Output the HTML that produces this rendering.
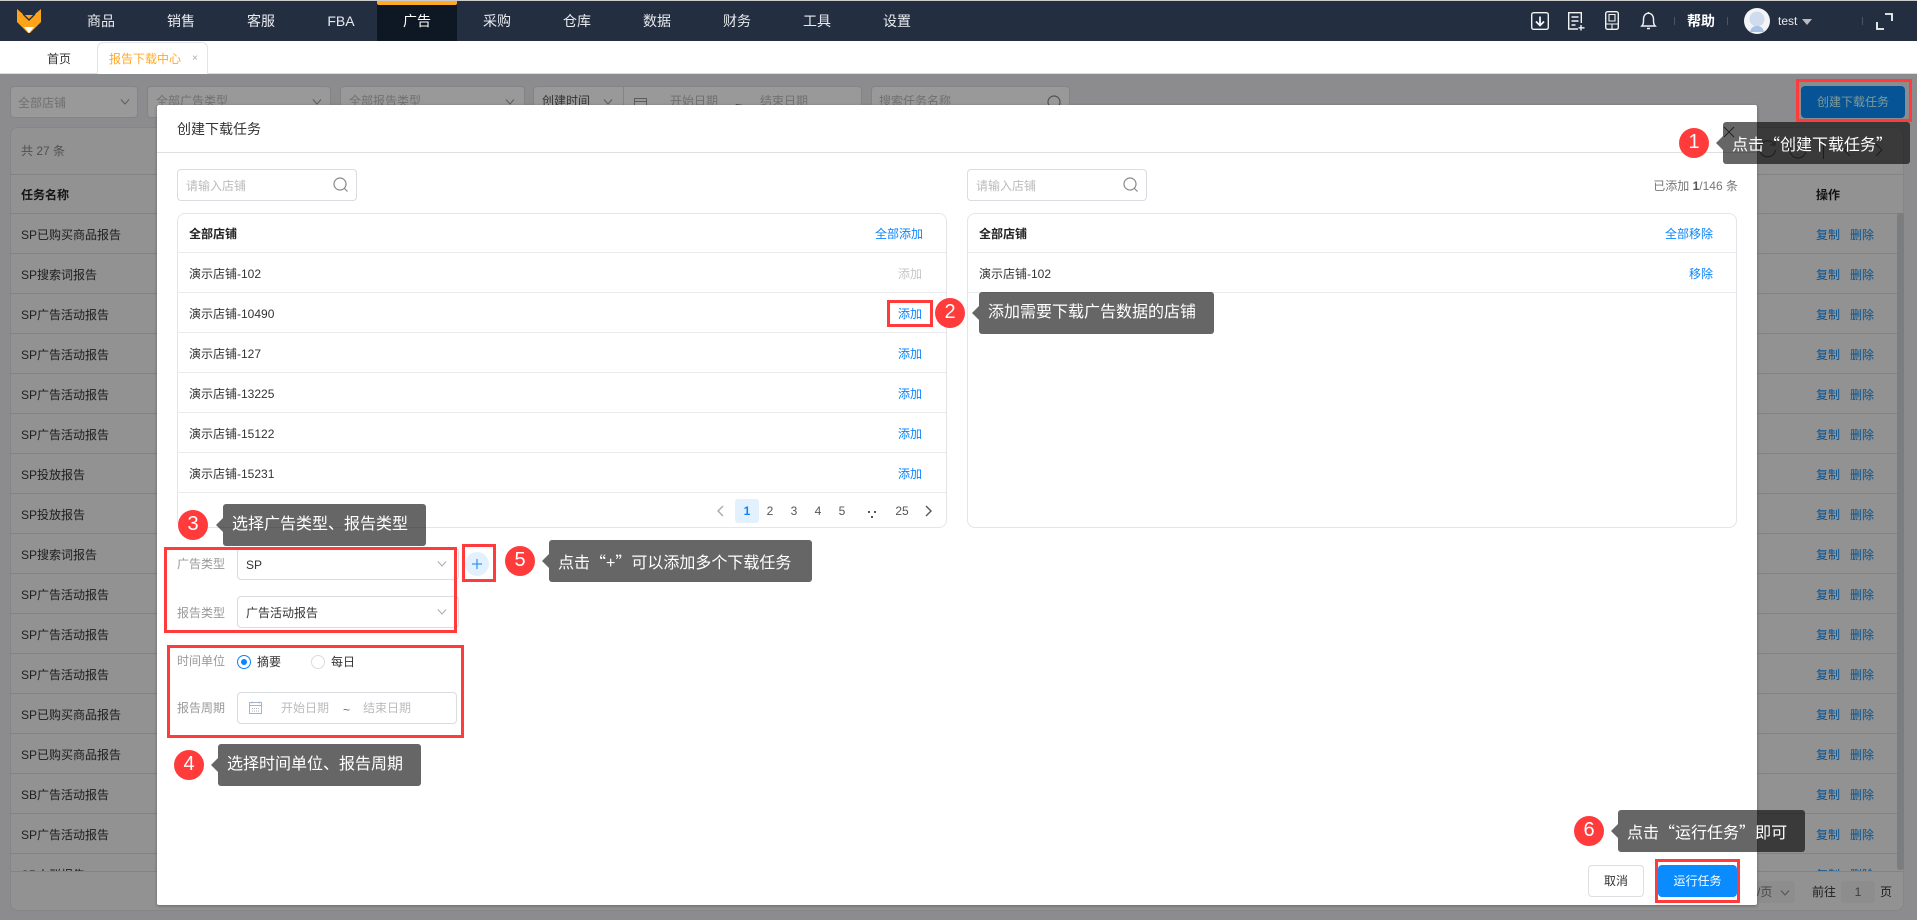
<!DOCTYPE html>
<html lang="zh-CN">
<head>
<meta charset="utf-8">
<title>报告下载中心</title>
<style>
*{box-sizing:border-box;margin:0;padding:0}
html,body{width:1917px;height:920px;overflow:hidden;background:#fff}
body{position:relative;font-family:"Liberation Sans","Noto Sans CJK SC",sans-serif;font-size:12px;color:#333}
.a{position:absolute}
.t{position:absolute;height:20px;line-height:20px;white-space:nowrap}
.nav{left:0;top:1px;width:1917px;height:40px;background:#232f41}
.top{left:0;top:0;width:1917px;height:1px;background:#ccc}
.ni{position:absolute;top:1px;height:40px;line-height:40px;width:80px;text-align:center;color:#e8eaed;font-size:14px}
.page{left:0;top:74px;width:1917px;height:846px;background:#e9eaed;overflow:hidden}
.fld{position:absolute;background:#fff;border:1px solid #d9dce1;border-radius:4px}
.overlay{left:0;top:74px;width:1917px;height:846px;background:rgba(0,0,0,.4)}
.modal{left:157px;top:105px;width:1600px;height:800px;background:#fff;border-radius:2px;box-shadow:0 1px 3px rgba(0,0,0,.3)}
.ln{position:absolute;height:1px;background:#e9ebee}
.panel{position:absolute;background:#fff;border:1px solid #e3e5e9;border-radius:8px}
.blue{color:#0a84ff}
.gr{color:#999}
.tip{position:absolute;height:42px;line-height:42px;background:rgba(0,0,0,.6);border-radius:3px;color:#fff;font-size:16px;white-space:nowrap}
.tip:before{content:"";position:absolute;left:-7px;top:14px;border-style:solid;border-width:7px 7px 7px 0;border-color:transparent rgba(0,0,0,.6) transparent transparent}
.num{position:absolute;width:30px;height:30px;border-radius:50%;background:#ff3b3b;color:#fff;font-size:20px;line-height:29px;text-align:center}
.rb{position:absolute;border:3px solid #ff3b3b}
.q{font-family:"Noto Sans CJK SC",sans-serif}
.tl{position:absolute;left:21px;height:20px;line-height:20px;color:#333}
.op{position:absolute;height:20px;line-height:20px;color:#0a8cf8}
.rl{position:absolute;left:10px;width:1894px;height:1px;background:#dadada}
.pg{position:absolute;top:501px;height:20px;line-height:20px;color:#555;width:24px;text-align:center}
svg{position:absolute;overflow:visible}
</style>
</head>
<body>
<!-- Header -->
<div class="a top"></div>
<div class="a nav"></div>
<div class="a" style="left:377px;top:1px;width:80px;height:40px;background:#0e1824"></div>
<div class="a" style="left:377px;top:1px;width:80px;height:4px;background:#ffa928;border-radius:0 0 2px 2px"></div>
<svg style="left:17px;top:9px" width="24" height="24" viewBox="0 0 24 24">
<path d="M0 0 L7 6 L17 6 L24 0 V13 L13 24 H11 L0 13Z" fill="#ffa31a"/>
<path d="M6 5 L12 11 L18 5" fill="none" stroke="#232f41" stroke-width="1.4"/>
<path d="M7 18 H17 L12 24Z" fill="#fff"/>
</svg>
<div class="ni" style="left:61px">商品</div>
<div class="ni" style="left:141px">销售</div>
<div class="ni" style="left:221px">客服</div>
<div class="ni" style="left:301px">FBA</div>
<div class="ni" style="left:377px;color:#fff">广告</div>
<div class="ni" style="left:457px">采购</div>
<div class="ni" style="left:537px">仓库</div>
<div class="ni" style="left:617px">数据</div>
<div class="ni" style="left:697px">财务</div>
<div class="ni" style="left:777px">工具</div>
<div class="ni" style="left:857px">设置</div>

<svg style="left:1531px;top:12px" width="18" height="18" viewBox="0 0 18 18" fill="none" stroke="#f2f3f5" stroke-width="1.4"><rect x=".7" y=".7" width="16.600" height="16.600" rx="2"/><path d="M9 4.500V13M5 9.500L9 13.500L13 9.500" stroke-width="1.800"/></svg>
<svg style="left:1568px;top:12px" width="18" height="19" viewBox="0 0 18 19" fill="none" stroke="#f2f3f5" stroke-width="1.4"><path d="M10 17H.7V.7H13.300V11"/><path d="M3.500 5H10.500M3.500 9H10.500M3.500 13H7.500M13 13V18.500M10.500 15.800H16.500"/></svg>
<svg style="left:1605px;top:11px" width="14" height="19" viewBox="0 0 14 19" fill="none" stroke="#f2f3f5" stroke-width="1.4"><rect x=".7" y=".7" width="12.600" height="17.600" rx="2"/><path d="M1 13H13M7 13V18.500M4 3.500H10V10H4Z" stroke-width="1.100"/></svg>
<svg style="left:1641px;top:11px" width="15" height="19" viewBox="0 0 15 19" fill="none" stroke="#f2f3f5" stroke-width="1.4"><path d="M.8 15H14.200C12.300 13 12.500 11 12.500 8C12.500 5 10.500 2.200 7.500 2.200C4.500 2.200 2.500 5 2.500 8C2.500 11 2.700 13 .8 15ZM7.500 1V2.200M6 17.500H9"/></svg>
<div class="a" style="left:1674px;top:17px;width:1px;height:8px;background:#4a5566"></div>
<div class="t" style="left:1687px;top:11px;color:#fff;font-size:14px;font-weight:bold">帮助</div>
<div class="a" style="left:1727px;top:17px;width:1px;height:8px;background:#4a5566"></div>
<svg style="left:1744px;top:8px" width="26" height="26" viewBox="0 0 26 26"><circle cx="13" cy="13" r="13" fill="#f2f4f7"/><circle cx="13" cy="11" r="7.500" fill="#cfdcee"/><path d="M6 24C7 19 10 18 13 18S19 19 20 24Z" fill="#a9c2e3"/></svg>
<div class="t" style="left:1778px;top:11px;color:#e8eaed;font-size:12px">test</div>
<div class="a" style="left:1802px;top:19px;border-style:solid;border-width:6px 5px 0 5px;border-color:#bbb transparent transparent transparent"></div>
<div class="a" style="left:1862px;top:17px;width:1px;height:8px;background:#4a5566"></div>
<svg style="left:1876px;top:13px" width="17" height="17" viewBox="0 0 17 17" fill="none" stroke="#f5f6f7" stroke-width="1.800"><path d="M9 1H16V8M1 9V16H8"/></svg>

<!-- Tabs -->
<div class="a" style="left:0;top:73px;width:1917px;height:1px;background:#dcdde0"></div>
<div class="t" style="left:47px;top:49px;color:#333">首页</div>
<div class="a" style="left:97px;top:42px;width:111px;height:32px;background:#fff;border:1px solid #e3e4e7;border-bottom:0;border-radius:6px 6px 0 0"></div>
<div class="t" style="left:109px;top:49px;color:#ffa928">报告下载中心</div>
<div class="t" style="left:192px;top:49px;color:#aaa;font-size:10px">×</div>

<!-- Underlying page -->
<div class="a page"></div>
<div class="fld" style="left:10px;top:86px;width:128px;height:32px"></div>
<div class="t" style="left:18px;top:93px;color:#bbb">全部店铺</div>
<svg style="left:120px;top:99px" width="10" height="6" fill="none" stroke="#999"><path d="M1 .500L5 5L9 .500"/></svg>
<div class="fld" style="left:147px;top:86px;width:184px;height:32px"></div>
<div class="t" style="left:156px;top:91px;color:#bbb">全部广告类型</div>
<svg style="left:312px;top:99px" width="10" height="6" fill="none" stroke="#999"><path d="M1 .500L5 5L9 .500"/></svg>
<div class="fld" style="left:340px;top:86px;width:185px;height:32px"></div>
<div class="t" style="left:349px;top:91px;color:#bbb">全部报告类型</div>
<svg style="left:505px;top:99px" width="10" height="6" fill="none" stroke="#999"><path d="M1 .500L5 5L9 .500"/></svg>
<div class="fld" style="left:533px;top:86px;width:329px;height:32px"></div>
<div class="a" style="left:623px;top:86px;width:1px;height:32px;background:#d9dce1"></div>
<div class="t" style="left:542px;top:91px;color:#555">创建时间</div>
<svg style="left:603px;top:99px" width="10" height="6" fill="none" stroke="#999"><path d="M1 .500L5 5L9 .500"/></svg>
<svg style="left:634px;top:96px" width="13" height="14" fill="none" stroke="#999"><rect x=".5" y="2.500" width="12" height="11"/><path d="M1 5.500H12"/></svg>
<div class="t" style="left:670px;top:91px;color:#bbb">开始日期</div>
<div class="t" style="left:735px;top:95px;color:#777">~</div>
<div class="t" style="left:760px;top:91px;color:#bbb">结束日期</div>
<div class="fld" style="left:871px;top:86px;width:199px;height:32px"></div>
<div class="t" style="left:879px;top:91px;color:#bbb">搜索任务名称</div>
<svg style="left:1047px;top:95px" width="15" height="15" fill="none" stroke="#888" stroke-width="1.200"><circle cx="7" cy="7" r="6"/><path d="M11 11L14 14"/></svg>
<div class="a" style="left:1801px;top:86px;width:104px;height:32px;background:#0a8cf8;border-radius:4px"></div>
<div class="t" style="left:1817px;top:92px;color:rgb(208,255,255);font-size:12px">创建下载任务</div>

<!-- Card -->
<div class="a" style="left:10px;top:127px;width:1894px;height:784px;background:#f4f4f4;border:1px solid #dedfe2;border-radius:8px"></div>
<div class="t" style="left:21px;top:141px;color:#888">共 27 条</div>
<svg style="left:1758px;top:139px" width="140" height="22" fill="none" stroke="#777" stroke-width="1"><path d="M16 5A8 8 0 1 0 17.500 11M17 1.500V6H12.500"/><circle cx="40" cy="11" r="8"/><path d="M38 9C38 6.500 42.500 6.500 42.500 9C42.500 11 40 11 40 13M40 15V16M65.500 2V20M92 5L86 11L92 17M118 5L124 11L118 17"/></svg>
<div class="rl" style="top:174px"></div><div class="rl" style="top:213px"></div>
<div class="tl" style="top:185px;font-weight:bold;color:#222">任务名称</div>
<div class="op" style="left:1816px;top:185px;font-weight:bold;color:#222">操作</div>

<div class="tl" style="top:225px">SP已购买商品报告</div><div class="rl" style="top:253px"></div>
<div class="tl" style="top:265px">SP搜索词报告</div><div class="rl" style="top:293px"></div>
<div class="tl" style="top:305px">SP广告活动报告</div><div class="rl" style="top:333px"></div>
<div class="tl" style="top:345px">SP广告活动报告</div><div class="rl" style="top:373px"></div>
<div class="tl" style="top:385px">SP广告活动报告</div><div class="rl" style="top:413px"></div>
<div class="tl" style="top:425px">SP广告活动报告</div><div class="rl" style="top:453px"></div>
<div class="tl" style="top:465px">SP投放报告</div><div class="rl" style="top:493px"></div>
<div class="tl" style="top:505px">SP投放报告</div><div class="rl" style="top:533px"></div>
<div class="tl" style="top:545px">SP搜索词报告</div><div class="rl" style="top:573px"></div>
<div class="tl" style="top:585px">SP广告活动报告</div><div class="rl" style="top:613px"></div>
<div class="tl" style="top:625px">SP广告活动报告</div><div class="rl" style="top:653px"></div>
<div class="tl" style="top:665px">SP广告活动报告</div><div class="rl" style="top:693px"></div>
<div class="tl" style="top:705px">SP已购买商品报告</div><div class="rl" style="top:733px"></div>
<div class="tl" style="top:745px">SP已购买商品报告</div><div class="rl" style="top:773px"></div>
<div class="tl" style="top:785px">SB广告活动报告</div><div class="rl" style="top:813px"></div>
<div class="tl" style="top:825px">SP广告活动报告</div><div class="rl" style="top:853px"></div>

<div class="op" style="left:1816px;top:225px">复制</div><div class="op" style="left:1850px;top:225px">删除</div>
<div class="op" style="left:1816px;top:265px">复制</div><div class="op" style="left:1850px;top:265px">删除</div>
<div class="op" style="left:1816px;top:305px">复制</div><div class="op" style="left:1850px;top:305px">删除</div>
<div class="op" style="left:1816px;top:345px">复制</div><div class="op" style="left:1850px;top:345px">删除</div>
<div class="op" style="left:1816px;top:385px">复制</div><div class="op" style="left:1850px;top:385px">删除</div>
<div class="op" style="left:1816px;top:425px">复制</div><div class="op" style="left:1850px;top:425px">删除</div>
<div class="op" style="left:1816px;top:465px">复制</div><div class="op" style="left:1850px;top:465px">删除</div>
<div class="op" style="left:1816px;top:505px">复制</div><div class="op" style="left:1850px;top:505px">删除</div>
<div class="op" style="left:1816px;top:545px">复制</div><div class="op" style="left:1850px;top:545px">删除</div>
<div class="op" style="left:1816px;top:585px">复制</div><div class="op" style="left:1850px;top:585px">删除</div>
<div class="op" style="left:1816px;top:625px">复制</div><div class="op" style="left:1850px;top:625px">删除</div>
<div class="op" style="left:1816px;top:665px">复制</div><div class="op" style="left:1850px;top:665px">删除</div>
<div class="op" style="left:1816px;top:705px">复制</div><div class="op" style="left:1850px;top:705px">删除</div>
<div class="op" style="left:1816px;top:745px">复制</div><div class="op" style="left:1850px;top:745px">删除</div>
<div class="op" style="left:1816px;top:785px">复制</div><div class="op" style="left:1850px;top:785px">删除</div>
<div class="op" style="left:1816px;top:825px">复制</div><div class="op" style="left:1850px;top:825px">删除</div>
<div class="a" style="left:1897px;top:213px;width:7px;height:657px;background:#cfd0d3;border-radius:3px"></div>
<div class="a" style="left:11px;top:854px;width:1892px;height:56px;overflow:hidden;border-radius:0 0 8px 8px"><div class="tl" style="left:10px;top:11px">SP人群报告</div><div class="op" style="left:1805px;top:11px">复制</div><div class="op" style="left:1839px;top:11px">删除</div><div class="a" style="left:0;top:17px;width:1892px;height:39px;background:#f4f4f4;border-top:1px solid #dadada"></div></div>
<div class="a" style="left:1750px;top:881px;width:45px;height:22px;background:#ebebed;border-radius:4px"></div>
<div class="t" style="left:1757px;top:882px;color:#777">/页</div>
<svg style="left:1780px;top:890px" width="10" height="6" fill="none" stroke="#888"><path d="M1 .500L5 5L9 .500"/></svg>
<div class="t" style="left:1812px;top:882px">前往</div>
<div class="a" style="left:1841px;top:881px;width:34px;height:22px;background:#ebebed;border-radius:4px;text-align:center;line-height:22px;color:#666">1</div>
<div class="t" style="left:1880px;top:882px">页</div>

<div class="a overlay"></div>

<!-- Modal -->
<div class="a modal"></div>
<div class="t" style="left:177px;top:119px;font-size:14px;color:#333">创建下载任务</div>
<svg style="left:1723px;top:126px" width="12" height="12" fill="none" stroke="#555"><path d="M1 1L11 11M11 1L1 11"/></svg>
<div class="ln" style="left:157px;top:152px;width:1600px;background:#dfe0e3"></div>

<div class="fld" style="left:177px;top:169px;width:180px;height:32px"></div>
<div class="t" style="left:186px;top:176px;color:#bbb">请输入店铺</div>
<svg style="left:333px;top:177px" width="16" height="16" fill="none" stroke="#888" stroke-width="1.200"><circle cx="7" cy="7" r="6"/><path d="M11 11L14.500 14.500"/></svg>
<div class="fld" style="left:967px;top:169px;width:180px;height:32px"></div>
<div class="t" style="left:976px;top:176px;color:#bbb">请输入店铺</div>
<svg style="left:1123px;top:177px" width="16" height="16" fill="none" stroke="#888" stroke-width="1.200"><circle cx="7" cy="7" r="6"/><path d="M11 11L14.500 14.500"/></svg>
<div class="t" style="right:179px;top:176px;color:#777">已添加 <b style="color:#555">1</b>/146 条</div>

<div class="panel" style="left:177px;top:213px;width:770px;height:315px"></div>
<div class="ln" style="left:178px;top:252px;width:768px"></div>
<div class="ln" style="left:178px;top:292px;width:768px"></div>
<div class="ln" style="left:178px;top:332px;width:768px"></div>
<div class="ln" style="left:178px;top:372px;width:768px"></div>
<div class="ln" style="left:178px;top:412px;width:768px"></div>
<div class="ln" style="left:178px;top:452px;width:768px"></div>
<div class="ln" style="left:178px;top:492px;width:768px"></div>
<div class="t" style="left:189px;top:224px;font-weight:bold;color:#222">全部店铺</div>
<div class="t blue" style="left:875px;top:224px">全部添加</div>
<div class="t" style="left:189px;top:264px">演示店铺-102</div><div class="t" style="left:898px;top:264px;color:#c4c6ca">添加</div>
<div class="t" style="left:189px;top:304px">演示店铺-10490</div><div class="t blue" style="left:898px;top:304px">添加</div>
<div class="t" style="left:189px;top:344px">演示店铺-127</div><div class="t blue" style="left:898px;top:344px">添加</div>
<div class="t" style="left:189px;top:384px">演示店铺-13225</div><div class="t blue" style="left:898px;top:384px">添加</div>
<div class="t" style="left:189px;top:424px">演示店铺-15122</div><div class="t blue" style="left:898px;top:424px">添加</div>
<div class="t" style="left:189px;top:464px">演示店铺-15231</div><div class="t blue" style="left:898px;top:464px">添加</div>

<svg style="left:716px;top:505px" width="8" height="12" fill="none" stroke="#aaa" stroke-width="1.400"><path d="M7 1L2 6L7 11"/></svg>
<div class="a" style="left:735px;top:499px;width:24px;height:24px;background:#e3f1ff;border-radius:3px"></div>
<div class="pg" style="left:735px;color:#0a84ff;font-weight:bold">1</div>
<div class="pg" style="left:758px">2</div>
<div class="pg" style="left:782px">3</div>
<div class="pg" style="left:806px">4</div>
<div class="pg" style="left:830px">5</div>
<svg style="left:868px;top:510px" width="9" height="9" fill="#555"><rect x="0" y="1" width="2" height="2"/><rect x="6" y="1" width="2" height="2"/><rect x="3" y="6" width="2" height="2"/></svg>
<div class="pg" style="left:890px">25</div>
<svg style="left:925px;top:505px" width="8" height="12" fill="none" stroke="#555" stroke-width="1.400"><path d="M1 1L6 6L1 11"/></svg>

<div class="panel" style="left:967px;top:213px;width:770px;height:315px"></div>
<div class="ln" style="left:968px;top:252px;width:768px"></div>
<div class="ln" style="left:968px;top:292px;width:768px"></div>
<div class="t" style="left:979px;top:224px;font-weight:bold;color:#222">全部店铺</div>
<div class="t blue" style="left:1665px;top:224px">全部移除</div>
<div class="t" style="left:979px;top:264px">演示店铺-102</div>
<div class="t blue" style="left:1689px;top:264px">移除</div>

<!-- Form -->
<div class="t gr" style="left:177px;top:554px">广告类型</div>
<div class="fld" style="left:237px;top:548px;width:222px;height:32px"></div>
<div class="t" style="left:246px;top:555px">SP</div>
<svg style="left:437px;top:561px" width="10" height="6" fill="none" stroke="#aaa"><path d="M1 .500L5 5L9 .500"/></svg>
<div class="t gr" style="left:177px;top:603px">报告类型</div>
<div class="fld" style="left:237px;top:596px;width:222px;height:32px"></div>
<div class="t" style="left:246px;top:603px">广告活动报告</div>
<svg style="left:437px;top:609px" width="10" height="6" fill="none" stroke="#aaa"><path d="M1 .500L5 5L9 .500"/></svg>

<div class="a" style="left:465px;top:552px;width:24px;height:24px;border-radius:50%;background:#e3f1ff"></div>
<svg style="left:472px;top:559px" width="10" height="10" stroke="#3a96f0" stroke-width="1.300"><path d="M5 0V10M0 5H10"/></svg>

<div class="t gr" style="left:177px;top:651px">时间单位</div>
<div class="a" style="left:237px;top:655px;width:14px;height:14px;border-radius:50%;border:1px solid #0a84ff;background:#fff"></div>
<div class="a" style="left:241px;top:659px;width:6px;height:6px;border-radius:50%;background:#0a84ff"></div>
<div class="t" style="left:257px;top:652px">摘要</div>
<div class="a" style="left:311px;top:655px;width:14px;height:14px;border-radius:50%;border:1px solid #d9dce1;background:#fff"></div>
<div class="t" style="left:331px;top:652px">每日</div>
<div class="t gr" style="left:177px;top:698px">报告周期</div>
<div class="fld" style="left:237px;top:692px;width:220px;height:32px"></div>
<svg style="left:249px;top:701px" width="13" height="13" fill="none" stroke="#a9b4c2"><rect x=".5" y="1.500" width="12" height="11"/><path d="M1 4.500H12M3 .5V2.500M10 .5V2.500"/><path d="M3 7.500H10M3 10H10" stroke-dasharray="1 1"/></svg>
<div class="t" style="left:281px;top:698px;color:#bbb">开始日期</div>
<div class="t" style="left:343px;top:700px;color:#666">~</div>
<div class="t" style="left:363px;top:698px;color:#bbb">结束日期</div>

<!-- Footer -->
<div class="a" style="left:1588px;top:865px;width:56px;height:32px;background:#fff;border:1px solid #dcdee2;border-radius:4px;text-align:center;line-height:30px;color:#333">取消</div>
<div class="a" style="left:1658px;top:865px;width:79px;height:32px;background:#0a8cff;border-radius:4px;text-align:center;line-height:32px;color:#fff">运行任务</div>

<!-- Annotations -->
<div class="rb" style="left:1796px;top:79px;width:116px;height:43px"></div>
<div class="num" style="left:1679px;top:128px">1</div>
<div class="tip" style="left:1723px;top:122px;width:187px;padding-left:9px">点击<span class="q">“</span>创建下载任务<span class="q">”</span></div>

<div class="rb" style="left:887px;top:300px;width:46px;height:27px"></div>
<div class="num" style="left:935px;top:298px">2</div>
<div class="tip" style="left:979px;top:292px;width:235px;padding-left:9px">添加需要下载广告数据的店铺</div>

<div class="num" style="left:178px;top:510px">3</div>
<div class="tip" style="left:223px;top:504px;width:203px;padding-left:9px">选择广告类型、报告类型</div>
<div class="rb" style="left:164px;top:547px;width:293px;height:86px"></div>

<div class="rb" style="left:167px;top:645px;width:297px;height:93px"></div>
<div class="num" style="left:174px;top:750px">4</div>
<div class="tip" style="left:218px;top:744px;width:203px;padding-left:9px">选择时间单位、报告周期</div>

<div class="rb" style="left:462px;top:544px;width:34px;height:38px"></div>
<div class="num" style="left:505px;top:546px">5</div>
<div class="tip" style="left:549px;top:540px;width:263px;padding-left:9px">点击<span class="q">“</span>+<span class="q">”</span>可以添加多个下载任务</div>

<div class="rb" style="left:1655px;top:859px;width:85px;height:44px"></div>
<div class="num" style="left:1574px;top:816px">6</div>
<div class="tip" style="left:1618px;top:810px;width:187px;padding-left:9px">点击<span class="q">“</span>运行任务<span class="q">”</span>即可</div>
</body>
</html>
